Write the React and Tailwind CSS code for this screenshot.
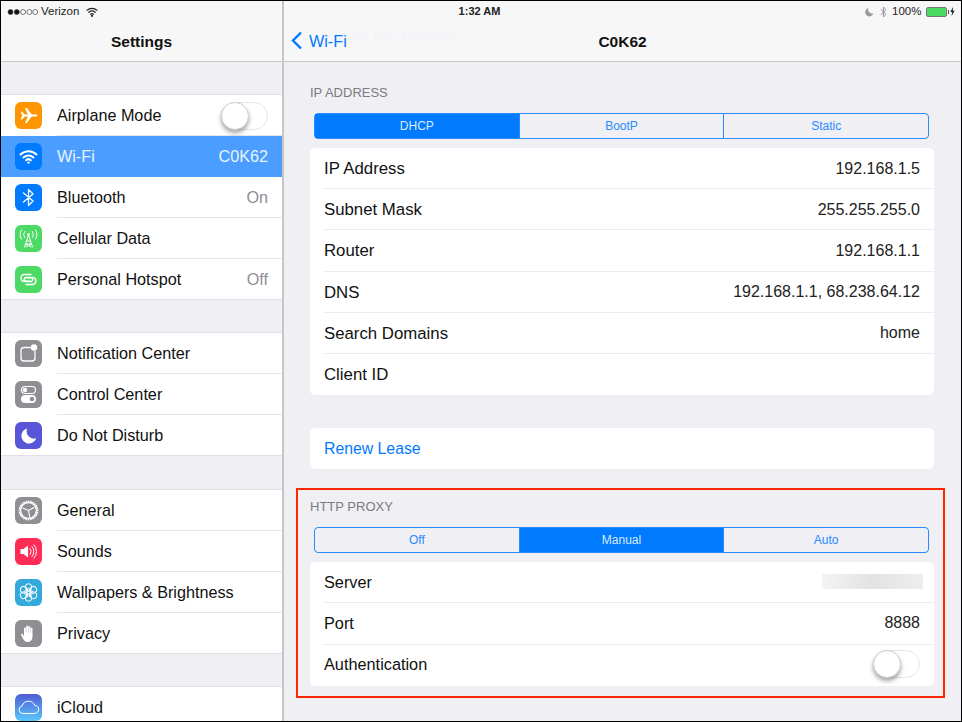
import React from "react";

const Tile = ({ bg, children }) => (
  <span className={`flex h-[27px] w-[27px] shrink-0 items-center justify-center rounded-[6px] ${bg}`}>
    <svg width="27" height="27" viewBox="0 0 27 27" fill="none" stroke="white" strokeLinecap="round" strokeLinejoin="round">
      {children}
    </svg>
  </span>
);

const WifiArcs = () => (
  <>
    <path d="M5.5 11.5a11.5 11.5 0 0 1 16 0" strokeWidth="2" />
    <path d="M8.5 14.5a7.3 7.3 0 0 1 10 0" strokeWidth="2" />
    <path d="M11.2 17.2a3.4 3.4 0 0 1 4.6 0" strokeWidth="2" />
    <circle cx="13.5" cy="19.6" r="1.2" fill="white" stroke="none" />
  </>
);

const gearTeeth = Array.from({ length: 24 }, (_, i) => i * 15);
const petals = [0, 60, 120, 180, 240, 300];

const icons = {
  airplane: (
    <Tile bg="bg-[#ff9500]">
      <path
        d="M5.5 9.5 7.3 13.5 5.5 17.5l1.7-.2 2.6-2.7h3L10 21h1.8l5-6.4h3.4c1.3 0 2.3-.5 2.3-1.1s-1-1.1-2.3-1.1h-3.4L11.8 6H10l2.8 6.4h-3L7.2 9.7z"
        fill="white"
        stroke="none"
      />
    </Tile>
  ),
  wifi: (
    <Tile bg="bg-[#007aff]">
      <WifiArcs />
    </Tile>
  ),
  bluetooth: (
    <Tile bg="bg-[#007aff]">
      <path d="M8.5 9 18 17l-4.5 4.5v-16L18 10l-9.5 8" strokeWidth="1.3" />
    </Tile>
  ),
  cellular: (
    <Tile bg="bg-[#4cd964]">
      <path d="M13.5 10 9.5 22M13.5 10l4 12M11.5 16h4M10.5 19h6M11 19l5 3M16 19l-5 3" strokeWidth="1" />
      <circle cx="13.5" cy="9.5" r="1.3" fill="white" stroke="none" />
      <path d="M9.6 6.5a5 5 0 0 0 0 6M17.4 6.5a5 5 0 0 1 0 6M6.5 5a8 8 0 0 0 0 9M20.5 5a8 8 0 0 1 0 9" strokeWidth="1" />
    </Tile>
  ),
  hotspot: (
    <Tile bg="bg-[#4cd964]">
      <path d="M16 8.5H9.5a3.5 3.5 0 0 0 0 7H16a1.8 1.8 0 0 0 0-3.6h-4" strokeWidth="1.4" />
      <path d="M11 18.5h6.5a3.5 3.5 0 0 0 0-7H11a1.8 1.8 0 0 0 0 3.6h4" strokeWidth="1.4" />
    </Tile>
  ),
  notification: (
    <Tile bg="bg-[#8e8e93]">
      <path d="M15.5 7.5H9a3 3 0 0 0-3 3V18a3 3 0 0 0 3 3h8a3 3 0 0 0 3-3v-6.5" strokeWidth="1.3" />
      <circle cx="19" cy="7.5" r="3.2" fill="white" stroke="none" />
    </Tile>
  ),
  control: (
    <Tile bg="bg-[#8e8e93]">
      <rect x="6.5" y="5.5" width="14" height="7" rx="3.5" strokeWidth="1.2" />
      <circle cx="10" cy="9" r="2.2" fill="white" stroke="none" />
      <path
        fillRule="evenodd"
        d="M10 14h7a4 4 0 0 1 0 8h-7a4 4 0 0 1 0-8zm7 1.7a2.3 2.3 0 1 0 0 4.6 2.3 2.3 0 0 0 0-4.6z"
        fill="white"
        stroke="none"
      />
    </Tile>
  ),
  moon: (
    <Tile bg="bg-[#5856d6]">
      <path d="M12.2 6.5a7.6 7.6 0 1 0 9 9.8 7.4 7.4 0 0 1-9-9.8z" fill="white" stroke="none" />
    </Tile>
  ),
  general: (
    <Tile bg="bg-[#8e8e93]">
      <circle cx="13.5" cy="13.5" r="8" strokeWidth="1.4" />
      {gearTeeth.map((deg) => (
        <path key={deg} d="M13.5 3.5v2.4" strokeWidth="1.5" strokeLinecap="butt" transform={`rotate(${deg} 13.5 13.5)`} />
      ))}
      <path d="M13.5 13.5 7.8 11M13.5 13.5l5.4-3M13.5 13.5l1.2 6.4" strokeWidth="1.1" />
    </Tile>
  ),
  sounds: (
    <Tile bg="bg-[#ff2d55]">
      <path d="M5.5 11h3l4.5-3.5v12L8.5 16h-3z" fill="white" stroke="none" />
      <path d="M15 10.5a4.5 4.5 0 0 1 0 6M17 8.5a7.5 7.5 0 0 1 0 10M19 6.8a10 10 0 0 1 0 13.4" strokeWidth="1" />
    </Tile>
  ),
  wallpaper: (
    <Tile bg="bg-[#34aadc]">
      {petals.map((deg) => (
        <g key={deg} transform={`rotate(${deg} 13.5 13.5)`}>
          <circle cx="13.5" cy="8" r="3.3" strokeWidth="1" />
          <circle cx="13.5" cy="11" r="1.5" strokeWidth="0.8" />
        </g>
      ))}
    </Tile>
  ),
  privacy: (
    <Tile bg="bg-[#8e8e93]">
      <path
        d="M9 13V8.3a1 1 0 0 1 1.9 0v4.2h.3V6.2a1 1 0 0 1 1.9 0v6.3h.3V6.8a1 1 0 0 1 1.9 0v6h.3V8.5a1 1 0 0 1 1.9 0v8c0 3-1.7 5.5-4.8 5.5-2.3 0-3.5-1-4.5-3l-2-3.8c-.5-1.1 1-1.9 1.7-.9L9 16.5z"
        fill="white"
        stroke="none"
      />
    </Tile>
  ),
  icloud: (
    <span className="flex h-[27px] w-[27px] shrink-0 items-center justify-center rounded-[6px] bg-gradient-to-b from-[#4f5bd5] to-[#5ac8fa]">
      <svg width="27" height="27" viewBox="0 0 27 27" fill="none" stroke="white" strokeLinecap="round" strokeLinejoin="round">
        <path d="M7.5 19.5a3.8 3.8 0 0 1-.5-7.5 6.8 6.8 0 0 1 12.8-.5 4 4 0 0 1-.3 8z" strokeWidth="1" />
      </svg>
    </span>
  ),
};

const sidebarGroups = [
  {
    gap: "h-[33px]",
    rows: [
      { label: "Airplane Mode", icon: "airplane", toggle: true },
      { label: "Wi-Fi", icon: "wifi", value: "C0K62", selected: true },
      { label: "Bluetooth", icon: "bluetooth", value: "On" },
      { label: "Cellular Data", icon: "cellular" },
      { label: "Personal Hotspot", icon: "hotspot", value: "Off" },
    ],
  },
  {
    gap: "h-[33px]",
    rows: [
      { label: "Notification Center", icon: "notification" },
      { label: "Control Center", icon: "control" },
      { label: "Do Not Disturb", icon: "moon" },
    ],
  },
  {
    gap: "h-[34px]",
    rows: [
      { label: "General", icon: "general" },
      { label: "Sounds", icon: "sounds" },
      { label: "Wallpapers & Brightness", icon: "wallpaper" },
      { label: "Privacy", icon: "privacy" },
    ],
  },
  {
    gap: "h-[33px]",
    rows: [{ label: "iCloud", icon: "icloud" }],
  },
];

const ipRows = [
  { label: "IP Address", value: "192.168.1.5" },
  { label: "Subnet Mask", value: "255.255.255.0" },
  { label: "Router", value: "192.168.1.1" },
  { label: "DNS", value: "192.168.1.1, 68.238.64.12" },
  { label: "Search Domains", value: "home" },
  { label: "Client ID", value: "" },
];

const Toggle = () => (
  <span className="relative block h-[28px] w-[47px] shrink-0 rounded-full border border-[#e5e5ea] bg-white">
    <span className="absolute left-[-1px] top-[-1px] h-[28px] w-[28px] rounded-full border border-[#d0d0d0] bg-white shadow-[0_3px_4px_rgba(0,0,0,0.35)]" />
  </span>
);

const SidebarRow = ({ row, last }) => (
  <div
    className={`flex h-[41px] items-center pl-[14px] ${row.selected ? "bg-[#4b9eff]" : "bg-white"} ${
      last ? "shadow-[inset_0_-1px_0_#e1e1e5]" : ""
    }`}
  >
    <span className="mr-[15px]">{icons[row.icon]}</span>
    <div
      className={`flex h-full min-w-0 flex-1 items-center justify-between pr-[14px] ${
        last || row.selected ? "" : "shadow-[inset_0_-1px_0_#e6e6e9]"
      }`}
    >
      <span className={row.selected ? "text-[#e9f3ff]" : "text-[#111]"}>{row.label}</span>
      {row.toggle && <Toggle />}
      {row.value && <span className={row.selected ? "text-[#e9f3ff]" : "text-[#8e8e93]"}>{row.value}</span>}
    </div>
  </div>
);

const Segmented = ({ options, active }) => (
  <div className="ml-[4px] mr-[5px] flex h-[26px] rounded-[4px] border border-[#2a8bff] text-[12px]">
    {options.map((opt, i) => (
      <div
        key={opt}
        className={`flex flex-1 items-center justify-center ${i > 0 ? "border-l border-[#2a8bff]" : ""} ${
          i === active ? "bg-[#007aff] text-[#d9eaff]" : "text-[#2a8bff]"
        }`}
      >
        {opt}
      </div>
    ))}
  </div>
);

const DetailRow = ({ label, labelSize, rowHeight, inner = "", children, last }) => (
  <div className={`flex items-center pl-[14px] ${rowHeight}`}>
    <div
      className={`flex h-full flex-1 items-center justify-between pr-[14px] ${inner} ${
        last ? "" : "shadow-[inset_0_-1px_0_#ececef]"
      }`}
    >
      <span className={`text-[#111] ${labelSize}`}>{label}</span>
      {children}
    </div>
  </div>
);

const SectionLabel = ({ children }) => (
  <div className="h-[15px] text-[13px] leading-[15px] text-[#7c7c80]">{children}</div>
);

export default function App() {
  return (
    <div
      className="relative flex h-[722px] w-[962px] overflow-hidden border border-black bg-[#efeff4] text-[16.2px]"
      style={{ fontFamily: '"Liberation Sans", Arial, sans-serif' }}
    >
      {/* status bar sits on top of both headers */}
      <div className="absolute inset-x-0 top-0 z-10 flex h-[21px] items-center justify-between px-[6px] text-[11.5px] text-[#222]">
        <div className="flex w-[200px] items-center gap-[3px]">
          <svg width="31" height="8" viewBox="0 0 31 8">
            {[3.5, 9.8, 16.1, 22.4, 28.2].map((cx, i) => (
              <circle key={cx} cx={cx} cy="4" r="2.5" fill={i < 2 ? "#111" : "none"} stroke="#444" strokeWidth="0.7" />
            ))}
          </svg>
          <span>Verizon</span>
          <svg className="ml-[4px]" width="12" height="10" viewBox="0 0 12 10" fill="none" stroke="#222" strokeWidth="1.2" strokeLinecap="round">
            <path d="M1 3.2a7.5 7.5 0 0 1 10 0M2.8 5.3a5 5 0 0 1 6.4 0M4.5 7.2a2.3 2.3 0 0 1 3 0" />
            <circle cx="6" cy="8.8" r="0.5" fill="#222" />
          </svg>
        </div>
        <span className="pr-[3px] text-[11px] font-bold">1:32 AM</span>
        <div className="flex w-[200px] items-center justify-end">
          <svg width="9" height="10" viewBox="0 0 10 10">
            <path d="M3.8.5a4.8 4.8 0 1 0 5.7 6.3A4.8 4.8 0 0 1 3.8.5z" fill="#9a9a9e" />
          </svg>
          <svg className="ml-[6px]" width="7" height="12" viewBox="0 0 7 12" fill="none" stroke="#8a8a8e" strokeWidth="0.9">
            <path d="M.7 3.2 6 8.3 3.4 11V1L6 3.7.7 8.8" />
          </svg>
          <span className="ml-[5px]">100%</span>
          <span className="ml-[4px] flex items-center gap-[1px]">
            <span className="block h-[10px] w-[21px] rounded-[2px] border border-[#777] bg-[#4cd964]" />
            <span className="block h-[4px] w-[1.5px] bg-[#555]" />
          </span>
          <svg className="ml-[1px]" width="5" height="9" viewBox="0 0 5 9">
            <path d="M3 0 .3 5h1.8L1.6 9l3-5.3H2.8z" fill="#222" />
          </svg>
        </div>
      </div>

      <aside className="flex h-full w-[281px] shrink-0 flex-col overflow-hidden">
        <header className="flex h-[61px] shrink-0 items-end justify-center border-b border-[#c8c7cc] bg-[#f7f7f8] pb-[8px] text-[15.5px] font-bold text-[#111]">
          Settings
        </header>
        {sidebarGroups.map((group) => (
          <div key={group.rows[0].label} className="shrink-0">
            <div className={`${group.gap} border-b border-[#e1e1e5]`} />
            {group.rows.map((row, i) => (
              <SidebarRow key={row.label} row={row} last={i === group.rows.length - 1} />
            ))}
          </div>
        ))}
      </aside>

      <main className="flex h-full flex-1 flex-col overflow-hidden border-l-2 border-[#c6c6ca]">
        <header className="relative flex h-[61px] shrink-0 items-end justify-center border-b border-[#c8c7cc] bg-[#f7f7f8] pb-[8px]">
          <span className="absolute left-[40px] top-[23px] text-[15.5px] text-[#f3f3f8]">Forget this Network</span>
          <div className="absolute bottom-[8px] left-[7px] flex items-center gap-[6px] text-[#007aff]">
            <svg width="12" height="19" viewBox="0 0 12 19" fill="none" stroke="#007aff" strokeWidth="2.4">
              <path d="M10 1.5 2 9.5l8 8" />
            </svg>
            <span>Wi-Fi</span>
          </div>
          <span className="text-[15.5px] font-bold text-[#111]">C0K62</span>
        </header>

        <div className="flex flex-col pl-[26px] pr-[27px] pt-[23px]">
          <SectionLabel>IP ADDRESS</SectionLabel>
          <div className="mt-[13px]">
            <Segmented options={["DHCP", "BootP", "Static"]} active={0} />
          </div>
          <div className="mt-[9px] overflow-hidden rounded-[5px] bg-white">
            {ipRows.map((row, i) => (
              <DetailRow
                key={row.label}
                label={row.label}
                labelSize="text-[16.8px]"
                rowHeight="h-[41.2px]"
                last={i === ipRows.length - 1}
              >
                <span className="text-[16px] text-[#222]">{row.value}</span>
              </DetailRow>
            ))}
          </div>
          <div className="mt-[33px] flex h-[41px] items-center rounded-[5px] bg-white pl-[14px] text-[15.8px] text-[#007aff]">
            Renew Lease
          </div>

          <section className="ml-[-14px] mr-[-11px] mt-[19px] h-[210px] border-2 border-[#ff2600] pl-[12px] pr-[9px] pt-[9px]">
            <SectionLabel>HTTP PROXY</SectionLabel>
            <div className="mt-[13px]">
              <Segmented options={["Off", "Manual", "Auto"]} active={1} />
            </div>
            <div className="mt-[9px] overflow-hidden rounded-[5px] bg-white">
              <DetailRow label="Server" labelSize="text-[16.3px]" rowHeight="h-[41.3px]" inner="pb-[2px]">
                <span className="mr-[-3px] block h-[15px] w-[101px] bg-gradient-to-r from-[#f4f4f4] via-[#e2e2e2] to-[#eeeeee]" />
              </DetailRow>
              <DetailRow label="Port" labelSize="text-[16.3px]" rowHeight="h-[41.3px]" inner="pb-[2px]">
                <span className="text-[16px] text-[#222]">8888</span>
              </DetailRow>
              <DetailRow label="Authentication" labelSize="text-[16.3px]" rowHeight="h-[41.3px]" inner="pb-[2px]" last>
                <Toggle />
              </DetailRow>
            </div>
          </section>
        </div>
      </main>
    </div>
  );
}
